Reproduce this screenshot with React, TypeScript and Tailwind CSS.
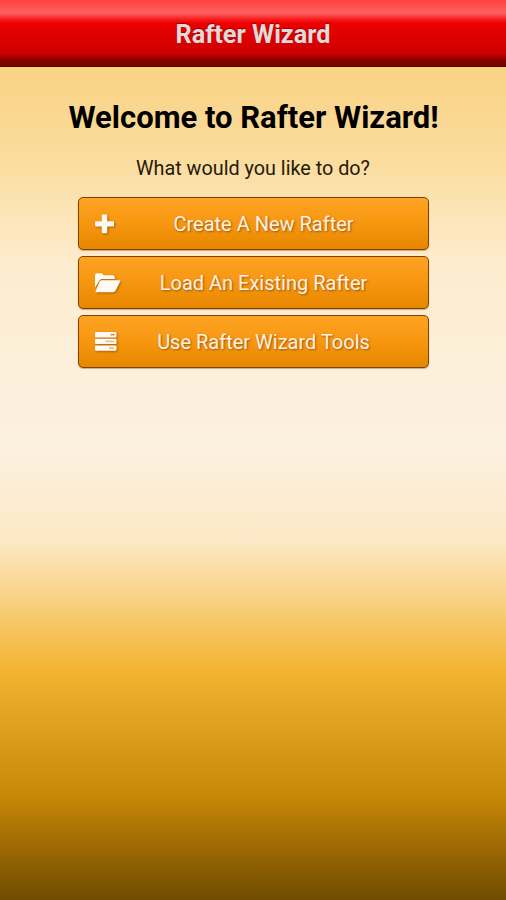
import type { ReactNode } from "react";

function PlusIcon() {
  return (
    <svg aria-hidden="true" className="h-5 w-[19px]" viewBox="0 0 19 20" fill="currentColor">
      <path d="M7.7.5h3.6q.9 0 .9.9v5.8h5.9q.9 0 .9.9v3.4q0 .9-.9.9h-5.9v5.9q0 .9-.9.9H7.7q-.9 0-.9-.9v-5.9H.9q-.9 0-.9-.9V8.1q0-.9.9-.9h5.9V1.4q0-.9.9-.9z" />
    </svg>
  );
}

function FolderIcon() {
  return (
    <svg aria-hidden="true" className="h-5 w-[26px]" viewBox="0 0 26 20" fill="currentColor">
      <path d="M0 14.5V2.3Q0 .3 2 .3h4.4Q8.4.3 8.4 2.3h9.4q2 0 2 2V6H7.4Q5.7 6 4.5 7.4z" />
      <path d="M6.6 7.2h18.1q1.2 0 .6 1.1l-4.6 9.2q-.9 1.8-2.7 1.8H1.5q-1.6 0-.8-1.4L4.4 9q.8-1.8 2.2-1.8z" />
    </svg>
  );
}

function TasksIcon() {
  return (
    <svg aria-hidden="true" className="h-5 w-[22px]" viewBox="0 0 22 20" fill="currentColor">
      <rect y="0" width="21.5" height="5.4" rx="1.2" />
      <rect y="6.7" width="21.5" height="5.4" rx="1.2" />
      <rect y="13.4" width="21.5" height="5.4" rx="1.2" />
      <g fill="#e98a2b">
        <rect x="15.5" y="1.9" width="4" height="1.6" />
        <rect x="10.5" y="8.6" width="8.5" height="1.6" opacity=".55" />
        <rect x="14" y="15.3" width="5" height="1.6" opacity=".65" />
      </g>
    </svg>
  );
}

function MenuButton({ icon, children }: { icon: ReactNode; children: ReactNode }) {
  return (
    <button
      type="button"
      className="flex h-[53px] w-full items-center rounded-[5px] border-[1.5px] border-[#804000] bg-gradient-to-b from-[#fda322] via-[#f7970f] to-[#e78600] pl-4 pr-[49px] text-[#fff1e4] shadow-[0_1px_1px_rgba(90,55,10,0.35)]"
    >
      <span className="w-[30px] shrink-0 text-[#fffaf3] drop-shadow-[1px_1px_1px_rgba(100,50,0,0.5)]">
        {icon}
      </span>
      <span className="flex-1 whitespace-nowrap pl-[24px] text-center text-[20px] leading-6 [text-shadow:1px_1px_2px_rgba(100,50,0,0.6)]">
        {children}
      </span>
    </button>
  );
}

export default function App() {
  return (
    <main className="h-[900px] w-full bg-[linear-gradient(to_bottom,#f9d284_67px,#fbdda0_165px,#fdecce_265px,#fcf0dc_380px,#fcf0de_450px,#fce8c5_542px,#f4b533_668px,#c98708_795px,#704c00_900px)] font-['Roboto','Liberation_Sans',sans-serif]">
      <header className="flex h-[67px] items-center justify-center border-b border-[#560000] bg-[linear-gradient(to_bottom,#ff4040_0px,#ff6161_13px,#f60b0b_21px,#eb0000_24px,#ce0000_53px,#820000_61px,#760000_67px)] pt-1">
        <h1 className="text-[25.3px] font-bold leading-8 text-[#e2dada] [text-shadow:0_-1px_1px_rgba(80,0,0,0.5)]">
          Rafter Wizard
        </h1>
      </header>

      <section className="flex flex-col items-center px-[78px] pt-[31px] text-black">
        <h2 className="whitespace-nowrap pl-px text-[31px] font-bold leading-10">Welcome to Rafter Wizard!</h2>
        <p className="mt-[17px] text-[19.8px] leading-7 text-[#241a08]">What would you like to do?</p>

        <nav className="mt-[14px] flex w-[351px] flex-col gap-[6px]">
          <MenuButton icon={<PlusIcon />}>Create A New Rafter</MenuButton>
          <MenuButton icon={<FolderIcon />}>Load An Existing Rafter</MenuButton>
          <MenuButton icon={<TasksIcon />}>Use Rafter Wizard Tools</MenuButton>
        </nav>
      </section>
    </main>
  );
}
